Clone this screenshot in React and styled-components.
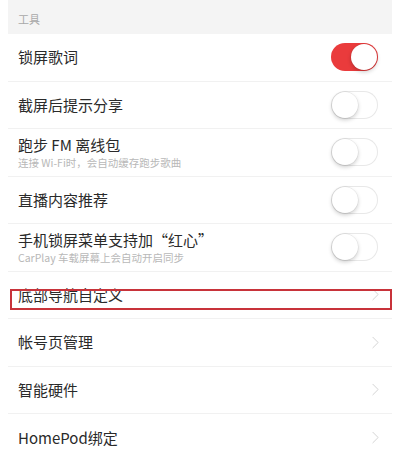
import React, { useState } from 'react';
import styled, { createGlobalStyle } from 'styled-components';

const GlobalStyle = createGlobalStyle`
  html, body {
    margin: 0;
    padding: 0;
    background: #ffffff;
  }
  body {
    font-family: "Noto Sans CJK SC", "Liberation Sans", sans-serif;
  }
`;

const items = [
  { title: '锁屏歌词', kind: 'switch', on: true },
  { title: '截屏后提示分享', kind: 'switch', on: false },
  { title: '跑步 FM 离线包', sub: '连接 Wi-Fi时，会自动缓存跑步歌曲', kind: 'switch', on: false },
  { title: '直播内容推荐', kind: 'switch', on: false },
  { title: '手机锁屏菜单支持加“红心”', sub: 'CarPlay 车载屏幕上会自动开启同步', kind: 'switch', on: false },
  { title: '底部导航自定义', kind: 'link', marked: true },
  { title: '帐号页管理', kind: 'link' },
  { title: '智能硬件', kind: 'link' },
  { title: 'HomePod绑定', kind: 'link' },
];

const App = () => {
  const [ toggles, setToggles ] = useState(items.map(i => !!i.on));

  const flip = idx => {
    setToggles(prev => prev.map((v, i) => (i === idx ? !v : v)));
  };

  return (
    <Page>
      <GlobalStyle />
      <SectionHeader>工具</SectionHeader>
      {items.map((item, i) => (
        <Row key={item.title} last={i === items.length - 1}>
          {item.marked ? <Marker /> : null}
          <Texts>
            <Title>{item.title}</Title>
            {item.sub ? <Sub>{item.sub}</Sub> : null}
          </Texts>
          {item.kind === 'switch' ? (
            <Switch on={toggles[i]} onClick={() => flip(i)}>
              <Knob on={toggles[i]} />
            </Switch>
          ) : (
            <Chevron viewBox="0 0 8 14">
              <path d="M1 1 L7 7 L1 13" fill="none" stroke="#d2d2d2" strokeWidth="1.1" strokeLinecap="round" strokeLinejoin="round" />
            </Chevron>
          )}
        </Row>
      ))}
    </Page>
  );
};

const Page = styled.div`
  width: 400px;
  height: 459px;
  overflow: hidden;
  background: #ffffff;
  padding: 0 8px;
  box-sizing: border-box;
`;

const SectionHeader = styled.div`
  height: 34px;
  background: #f4f4f4;
  color: #a9a9a9;
  font-size: 11px;
  padding-left: 10px;
  padding-top: 4px;
  box-sizing: border-box;
  display: flex;
  align-items: center;
`;

const Row = styled.div`
  position: relative;
  height: 47.5px;
  display: flex;
  align-items: center;
  padding: 0 12px 0 10px;
  border-bottom: ${p => (p.last ? 'none' : '1px solid #f1f1f1')};
  box-sizing: border-box;
`;

const Marker = styled.div`
  position: absolute;
  left: 2px;
  right: 0;
  top: 17px;
  height: 21px;
  border: 2px solid #c8333a;
  box-sizing: border-box;
  pointer-events: none;
`;

const Texts = styled.div`
  flex: 1;
  display: flex;
  flex-direction: column;
  justify-content: center;
  min-width: 0;
`;

const Title = styled.div`
  font-size: 15px;
  color: #2a2a2a;
  line-height: 20px;
  white-space: nowrap;
`;

const Sub = styled.div`
  font-size: 10.5px;
  color: #b8b8b8;
  line-height: 14px;
  margin-top: 1px;
  white-space: nowrap;
`;

const Switch = styled.div`
  position: relative;
  width: 47px;
  height: 28px;
  margin-right: 2px;
  border-radius: 14px;
  background: ${p => (p.on ? '#ea3b3c' : '#ffffff')};
  box-shadow: ${p => (p.on ? 'none' : 'inset 0 0 0 1px #e8e8e8')};
  cursor: pointer;
  flex-shrink: 0;
`;

const Knob = styled.div`
  position: absolute;
  top: 1px;
  left: ${p => (p.on ? '20px' : '1px')};
  width: 26px;
  height: 26px;
  border-radius: 50%;
  background: #ffffff;
  box-shadow: 0 2px 4px rgba(0, 0, 0, 0.2), 0 0 0 0.5px rgba(0, 0, 0, 0.08);
`;

const Chevron = styled.svg`
  width: 7px;
  height: 13px;
  margin-right: 1px;
  flex-shrink: 0;
`;

export default App;
